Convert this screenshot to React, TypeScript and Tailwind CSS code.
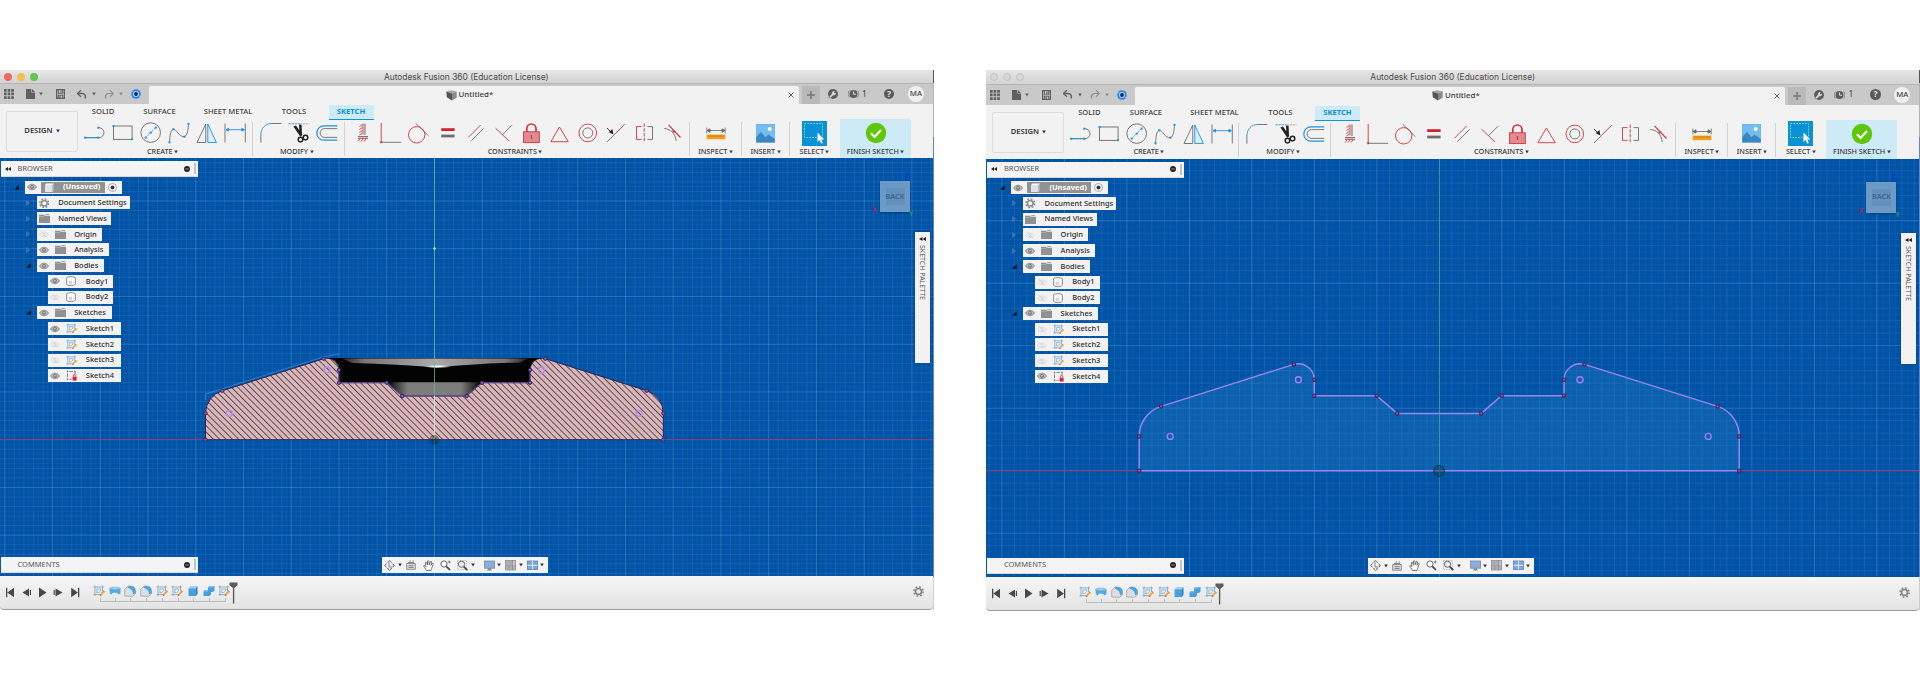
import React from 'react';

const G = '#6b6b6b';
const B = '#1f93e0';
const R = '#d2323c';

type Kids = { children: React.ReactNode };

function Tool({ children }: Kids) {
  return (
    <svg className="h-6 w-[28.15px] shrink-0" viewBox="0 0 28.15 24" fill="none" strokeWidth="0.9">
      {children}
    </svg>
  );
}

function Dot({ x, y, c = B }: { x: number; y: number; c?: string }) {
  return <rect x={x - 1} y={y - 1} width="2" height="2" fill={c} />;
}

function Caret({ className = '' }: { className?: string }) {
  return (
    <svg className={`shrink-0 ${className}`} width="4" height="4" viewBox="0 0 4 4">
      <path d="M.2 .4h3.600L2 3.600z" fill="currentColor" />
    </svg>
  );
}

function Label({ children }: Kids) {
  return (
    <div className="-mt-px flex h-[11px] items-center justify-center gap-[1.500px] whitespace-nowrap text-[7.3px] font-medium leading-none tracking-[-0.05px] text-[#3c3c3c]">
      {children}
      <Caret />
    </div>
  );
}

function Sep() {
  return <div className="mt-[2px] h-[34px] w-px shrink-0 bg-[#d3d3d3]" />;
}

function CreateTools() {
  return (
    <>
      <Tool>
        <path d="M3.5 16.7H18A5 5 0 0 0 18 6.7" stroke={G} />
        <path d="M4 16.7h13" stroke={B} />
        <Dot x={4.2} y={16.7} /><Dot x={17.3} y={16.7} /><Dot x={17.3} y={6.7} />
      </Tool>
      <Tool>
        <rect x="4.5" y="5" width="18.6" height="13.4" stroke={G} />
        <Dot x={4.5} y={5} /><Dot x={23} y={18.2} />
      </Tool>
      <Tool>
        <circle cx="13.7" cy="11.6" r="9.8" stroke={G} />
        <path d="M8.5 16.8 18.9 6.4" stroke={B} strokeDasharray="2 1" />
        <Dot x={8.7} y={16.6} /><Dot x={13.7} y={11.6} /><Dot x={18.7} y={6.6} />
      </Tool>
      <Tool>
        <path d="M4.5 21.3C5 14 5.5 9 8.4 8.3S14 16.5 19.5 15.7C22.6 14.5 23.2 8 23.5 2.5" stroke={G} />
        <Dot x={4.5} y={21.3} /><Dot x={8.3} y={8.3} /><Dot x={19.5} y={15.7} /><Dot x={23.5} y={2.8} />
      </Tool>
      <Tool>
        <path d="M12.8 3v18.5H4z" stroke={G} />
        <path d="M14.8 3v18.5h8.6z" stroke={B} fill="#dceefa" />
      </Tool>
      <Tool>
        <path d="M4 2.5v19M24.3 2.5v19" stroke={G} />
        <path d="M5 8.7h18.4M5 8.7l2.5-1.4v2.8zM23.4 8.7l-2.5-1.4v2.8z" stroke={B} fill={B} />
      </Tool>
    </>
  );
}

function ModifyTools() {
  return (
    <>
      <Tool>
        <path d="M3.9 21.7v-8M14.5 2.5h10" stroke={G} />
        <path d="M3.9 14C3.9 7.5 8 2.5 14.8 2.5" stroke={B} />
      </Tool>
      <Tool>
        <path d="M3.5 2.8h11" stroke={B} strokeDasharray="2.4 .8" />
        <path d="M14.5 2.8h10" stroke="#aaa" strokeDasharray="2.4 .8" />
        <path d="M8.4 5.400 11 4.6l6.400 9.400-2 1.800zM14 3.4l2.600.4.4 10-2.400 1z" fill="#222" />
        <circle cx="15.500" cy="18.6" r="2.300" stroke="#222" strokeWidth="1.5" />
        <circle cx="20.500" cy="16.6" r="2.300" stroke="#222" strokeWidth="1.5" />
      </Tool>
      <Tool>
        <path d="M24.3 4.8H11a7.2 7.2 0 0 0 0 14.4h13.3" stroke={B} strokeWidth="1.2" />
        <path d="M24.3 7.6H11.5a4.4 4.4 0 0 0 0 8.8h12.8" stroke={G} />
      </Tool>
    </>
  );
}

function ConstraintTools() {
  return (
    <>
      <Tool>
        <path d="M16 2.5v11.5M9 15.6h10" stroke="#777" strokeWidth="1.1" />
        <path d="M14 2.5v11M10.5 5.5l3-2M10.5 8.5l3-2M10.5 11.5l3-2M10.5 14l3-2M9 17.4h10M9 20.5l2-2.5M12 20.5l2-2.5M15 20.5l2-2.5" stroke={R} />
      </Tool>
      <Tool>
        <path d="M4.2 2v19" stroke={R} />
        <path d="M4.2 21.3h20" stroke={G} />
        <Dot x={4.2} y={21.2} c={R} />
      </Tool>
      <Tool>
        <circle cx="11.7" cy="13.8" r="8.2" stroke={R} />
        <path d="M10.7 2.3l12.7 12.4" stroke={G} />
      </Tool>
      <Tool>
        <path d="M7.2 8.6h13.4" stroke="#cf2230" strokeWidth="2.8" />
        <path d="M7.2 15h13.4" stroke="#6d6d6d" strokeWidth="2.8" />
      </Tool>
      <Tool>
        <path d="M6.4 16.3 18.6 4" stroke={R} />
        <path d="M9.4 19.7 21.6 7.4" stroke={G} />
      </Tool>
      <Tool>
        <path d="M5.6 7.3 19 19.9" stroke={R} />
        <path d="M12.500 13.700 22 4.2" stroke={G} />
      </Tool>
      <Tool>
        <path d="M8.8 11V7.6a4.6 4.6 0 0 1 9.2 0V11" stroke={R} strokeWidth="1.7" />
        <rect x="5.6" y="10.8" width="15.7" height="10.8" fill="#e08b90" stroke={R} />
        <path d="M13.4 14v4" stroke="#b3202a" />
      </Tool>
      <Tool>
        <path d="M13.4 6 22.3 20.7H4.9z" stroke={R} />
      </Tool>
      <Tool>
        <circle cx="13.8" cy="11.9" r="8.8" stroke={R} />
        <circle cx="13.8" cy="11.9" r="5" stroke={G} />
      </Tool>
      <Tool>
        <path d="M5 21 12.8 13.2" stroke={G} />
        <path d="M12.8 13.2 22.8 3" stroke={R} />
        <path d="M5 7l5 5" stroke="#222" />
        <path d="M11.4 13.6 6.8 11.2 10.4 8z" fill="#222" />
      </Tool>
      <Tool>
        <path d="M10.5 5.6h-5v12.8h5" stroke={R} />
        <path d="M13.2 2.5v19" stroke={R} strokeDasharray="3.5 1.2" />
        <path d="M16.5 5.6h5v12.8h-5" stroke={G} />
      </Tool>
      <Tool>
        <path d="M9.5 3.8 21.5 16.5" stroke={R} strokeWidth="1.1" />
        <path d="M5.2 7.6c6.5.2 11 4.400 12 12.400" stroke={G} />
        <Dot x={14.5} y={10.5} c={R} />
      </Tool>
    </>
  );
}

function Group({ children, label, className, labelClass = '' }: Kids & { label: string; className: string; labelClass?: string }) {
  return (
    <div className={`flex shrink-0 flex-col ${className}`}>
      <div className="flex h-[27px] items-center justify-center pb-[1px]">{children}</div>
      <div className={labelClass}>
        <Label>{label}</Label>
      </div>
    </div>
  );
}

function Ribbon() {
  return (
    <div className="flex h-[54px] shrink-0 bg-[#f2f2f2]">
      <div className="ml-[6px] mt-[7px] flex h-[41px] w-[72px] shrink-0 items-center justify-center gap-[3px] rounded-[2px] border border-[#dcdcdc] pb-px text-[7.6px] font-semibold text-[#333]">
        DESIGN
        <Caret />
      </div>
      <div className="ml-[3px] flex flex-1 flex-col">
        <div className="flex h-4 items-stretch text-[7.6px] font-medium leading-none text-[#444]">
          <div className="flex w-11 items-center justify-center">SOLID</div>
          <div className="flex w-[69px] items-center justify-center">SURFACE</div>
          <div className="flex w-[68px] items-center justify-center whitespace-nowrap">SHEET METAL</div>
          <div className="flex w-16 items-center justify-center">TOOLS</div>
          <div className="ml-[3px] mt-px flex w-[45px] items-center justify-center border-b border-[#0a96d8] bg-[#cdeaf7] pr-px font-bold text-[#0a8fd4]">
            SKETCH
          </div>
        </div>
        <div className="flex h-[38px]">
          <Group label="CREATE" className="w-[171px] pr-[3px]" labelClass="pr-[5px]"><CreateTools /></Group>
          <Sep />
          <div className="w-[4px]" />
          <Group label="MODIFY" className="w-[84.5px]" labelClass="pr-[5px]"><ModifyTools /></Group>
          <div className="w-[2.5px]" />
          <Sep />
          <div className="w-[4px]" />
          <Group label="CONSTRAINTS" className="w-[338px]" labelClass="pr-[6px]"><ConstraintTools /></Group>
          <div className="w-[2px]" />
          <Sep />
          <Group label="INSPECT" className="w-[51px]">
            <svg width="20" height="20" viewBox="0 0 20 20" fill="none">
              <path d="M.8 4.500v6M19.200 4.500v6M1 7.500h18M1 7.500l3-1.700v3.400zM19 7.500l-3-1.700v3.400z" stroke="#666" strokeWidth=".8" fill="#666" />
              <rect x=".6" y="11.600" width="18.800" height="4.600" fill="#f3a11c" />
              <path d="M3 12v2M5 12v2M7 12v2M9 12v2M11 12v2M13 12v2M15 12v2M17 12v2" stroke="#a86600" strokeWidth=".6" />
            </svg>
          </Group>
          <Sep />
          <Group label="INSERT" className="w-[47px]">
            <svg width="19" height="19" viewBox="0 0 19 19">
              <rect width="19" height="18.500" fill="#74bdf2" stroke="#6aa9d8" strokeWidth=".6" />
              <circle cx="13.700" cy="5" r="2" fill="#fff3c4" />
              <path d="M.3 13 5 8l4.500 5.200 3-2.600 6.200 4.400v3.300H.3z" fill="#3a85c2" />
            </svg>
          </Group>
          <Sep />
          <Group label="SELECT" className="w-[49px]">
            <svg width="25" height="25" viewBox="0 0 25 25">
              <rect width="25" height="25" fill="#0b91d6" />
              <rect x="2.500" y="2.500" width="18" height="14" fill="none" stroke="#8fe0a0" strokeWidth=".9" strokeDasharray="1.700 1.200" />
              <path d="M15.500 11.500v9.500l2.200-2 1.400 3.600 1.700-.7-1.500-3.500h3z" fill="#fff" />
            </svg>
          </Group>
          <div className="-mt-[1px] ml-px flex w-[71px] bg-[#cdeaf7] pt-px">
            <Group label="FINISH SKETCH" className="w-[71px]">
              <svg width="22" height="22" viewBox="0 0 22 22">
                <circle cx="11" cy="11" r="10.200" fill="#60c608" />
                <path d="M6 11.300 9.600 15 16 8" fill="none" stroke="#fff" strokeWidth="2.200" />
              </svg>
            </Group>
          </div>
        </div>
      </div>
    </div>
  );
}

function QuickBar() {
  return (
    <div className="flex h-5 shrink-0 bg-[#c9c9c9] text-[#606060]">
      <div className="flex w-[149px] shrink-0 items-center">
        <svg className="ml-[4px]" width="10" height="10" viewBox="0 0 10 10" fill="currentColor">
          <path d="M0 0h2.700v2.700H0zM3.600 0h2.700v2.700H3.600zM7.200 0h2.700v2.700H7.200zM0 3.600h2.700v2.700H0zM3.600 3.600h2.700v2.700H3.600zM7.200 3.600h2.700v2.700H7.200zM0 7.200h2.700v2.700H0zM3.600 7.200h2.700v2.700H3.600zM7.200 7.200h2.700v2.700H7.200z" />
        </svg>
        <svg className="ml-[12px]" width="9" height="10" viewBox="0 0 9 10" fill="currentColor">
          <path d="M0 0h5.300v3.600H9V10H0zM6 0l3 3H6z" />
        </svg>
        <Caret className="ml-[4px]" />
        <svg className="ml-[13px]" width="9" height="10" viewBox="0 0 9 10" fill="none" stroke="currentColor">
          <path d="M.6 .6h7.800v8.800H.6z" strokeWidth="1.200" />
          <path d="M2.200 1v3.200h4.600V1M2.200 9V6.300h4.600V9M5 1.500v2M4 7v2" strokeWidth="1.100" />
        </svg>
        <svg className="ml-[12px]" width="10" height="9" viewBox="0 0 10 9" fill="none" stroke="currentColor">
          <path d="M1 3.500h4c2.500 0 3.800 1.500 3.300 5" strokeWidth="1.500" />
          <path d="M4 .2.400 3.500 4 6.800" strokeWidth="1.300" />
        </svg>
        <Caret className="ml-[5px]" />
        <svg className="ml-[8px] text-[#8d8d8d]" width="10" height="9" viewBox="0 0 10 9" fill="none" stroke="currentColor">
          <path d="M8.500 3.500H5c-2.500 0-4 1.500-3.500 5" strokeWidth="1.200" />
          <path d="M6 .2 9.300 3.500 6 6.800" strokeWidth="1.100" />
        </svg>
        <Caret className="ml-[5px] text-[#8d8d8d]" />
        <svg className="ml-[7.500px]" width="10" height="10" viewBox="0 0 10 10">
          <circle cx="5" cy="5" r="4.800" fill="#2b86ee" />
          <circle cx="5" cy="5" r="3" fill="#9fd4ff" />
          <circle cx="5" cy="5" r="1.900" fill="#12284a" />
          <path d="M1 2.200 2.500 3.500M9 7.800 7.500 6.500" stroke="#c9c9c9" strokeWidth=".7" />
        </svg>
      </div>
      <div className="mt-[2px] flex w-[650px] shrink-0 items-center rounded-t-[2px] bg-[#f2f2f2]">
        <div className="ml-[296.500px] flex w-[342.500px] items-center">
          <svg width="11" height="11" viewBox="0 0 11 11">
            <path d="M.3 1.500 5 .2l5.700 1.200L6 3.500z" fill="#a5a5a5" />
            <path d="M.3 1.500 6 3.500v7L.8 7.300z" fill="#555" />
            <path d="M6 3.500l4.700-2v6L6 10.500z" fill="#888" />
          </svg>
          <span className="ml-[2px] text-[7.900px] font-medium leading-none text-[#3d3d3d]">Untitled*</span>
        </div>
        <svg width="6" height="6" viewBox="0 0 6 6" stroke="#555" strokeWidth=".9">
          <path d="M.5 .5l5 5M5.500 .5l-5 5" />
        </svg>
      </div>
      <div className="ml-[3px] mt-[2px] flex w-[18px] shrink-0 items-center justify-center bg-[#b9b9b9]">
        <svg width="8" height="8" viewBox="0 0 8 8" stroke="#777" strokeWidth="1.500"><path d="M4 0v8M0 4h8" /></svg>
      </div>
      <div className="flex flex-1 items-center">
        <svg className="ml-[8px]" width="10" height="10" viewBox="0 0 10 10">
          <circle cx="5" cy="5" r="5" fill="#5d5d5d" />
          <path d="M2 8.200 5 5.200" stroke="#d8d8d8" strokeWidth="1.700" />
          <path d="M4 5.500a2.400 2.400 0 0 1 2.800-3.300L5.800 3.600l.8.800 1.400-1A2.400 2.400 0 0 1 5 6.200z" fill="#d8d8d8" />
        </svg>
        <svg className="ml-[10px]" width="11" height="10" viewBox="0 0 11 10">
          <path d="M1.600 1.500a4.800 4.800 0 0 0 0 7M9.400 1.500a4.800 4.800 0 0 1 0 7" stroke="#777" fill="none" strokeWidth=".8" />
          <circle cx="5.500" cy="5" r="4" fill="#5d5d5d" />
          <path d="M5.500 2.500V5.200H8" stroke="#ddd" fill="none" />
        </svg>
        <span className="ml-[3px] text-[8.500px] leading-none text-[#444]">1</span>
        <div className="ml-[17px] flex size-[10.500px] items-center justify-center rounded-full bg-[#5a5a5a] text-[8.500px] font-bold leading-none text-[#e4e4e4]">?</div>
        <div className="ml-[13.500px] flex size-4 items-center justify-center rounded-full bg-[#f0f0f0] text-[7.800px] font-medium leading-none text-[#444]">MA</div>
      </div>
    </div>
  );
}

function Eye({ on }: { on: boolean }) {
  return on ? (
    <svg width="10" height="8" viewBox="0 0 10 8">
      <path d="M.5 4C2.500.3 7.500.3 9.500 4 7.500 7.700 2.500 7.700.5 4z" fill="#b9b9b9" stroke="#8c8c8c" strokeWidth=".9" />
      <circle cx="5" cy="4" r="1.900" fill="#777" />
      <circle cx="5" cy="3.800" r=".7" fill="#eee" />
    </svg>
  ) : (
    <svg width="10" height="8" viewBox="0 0 10 8" fill="none" stroke="#d6d6d6" strokeWidth=".9">
      <path d="M.7 4.500C2.500 1.200 7.500 1.200 9.300 4.500 7.500 7.500 2.500 7.500.7 4.500zM1.500 .8l7 6.800" />
      <circle cx="5" cy="4.400" r="1.400" />
    </svg>
  );
}

function SketchGlyph({ size = 11 }: { size?: number }) {
  return (
    <svg width={size} height={size} viewBox="0 0 11 11" fill="none">
      <path d="M.5 1.800h9.500M.5 8.800h6M1.800 .5v9.500M8.700 .5v5" stroke="#7fa6c4" strokeWidth=".8" />
      <path d="M3.600 7.200V3.600h3.600c0 2-1.200 3.400-3.600 3.600z" stroke="#4f97d0" strokeWidth=".6" fill="#f5fafd" />
      <path d="M10 5.700 7.300 8.500" stroke="#f3a32a" strokeWidth="1.700" />
      <path d="M6.900 8.200 6 10.200l2-.9z" fill="#d43b2a" />
      <path d="M9.500 5.200l1.200 1.200" stroke="#e05a4a" strokeWidth=".9" />
    </svg>
  );
}

type Kind = 'root' | 'gear' | 'folder' | 'body' | 'sketch' | 'locked';

function Cog({ size, color }: { size: number; color: string }) {
  return (
    <svg width={size} height={size} viewBox="0 0 10 10" fill="none" stroke={color}>
      <circle cx="5" cy="5" r="2.700" strokeWidth="1.500" />
      <circle cx="5" cy="5" r="4.200" strokeWidth="1.400" strokeDasharray="1.650 1.650" />
    </svg>
  );
}

function Glyph({ kind }: { kind: Kind }) {
  if (kind === 'gear') return <Cog size={10.500} color="#8c8c8c" />;
  if (kind === 'folder')
    return (
      <svg width="11" height="9" viewBox="0 0 11 9" fill="#919191">
        <path d="M0 .8h5l.8 1H11V9H0z" />
        <path d="M5.800 0H10v1H6.500z" fill="#a8a8a8" />
        <path d="M0 2.500h4.800l1-.8" stroke="#c4c4c4" strokeWidth=".5" fill="none" />
      </svg>
    );
  if (kind === 'body')
    return (
      <svg width="10" height="10" viewBox="0 0 10 10" fill="none">
        <path d="M.6 1.800C2 .2 8 .2 9.400 1.800V8L8 9.400H1.800L.6 8z" fill="#fafafa" stroke="#777" strokeWidth=".8" />
        <rect x="3" y="4.800" width="3" height="3" fill="#cfd4da" />
      </svg>
    );
  if (kind === 'sketch') return <SketchGlyph />;
  if (kind === 'locked')
    return (
      <svg width="11" height="11" viewBox="0 0 11 11" fill="none">
        <path d="M.8 1.400h1.600M3.500 1.400h3.500M8.200 1.400h1.600M1.500 .8v1.600M1.500 3.500v3.500M1.500 8.200v1.600M.8 9.300h1.600M3.500 9.300h2M9 .8v3.500" stroke="#666" strokeWidth=".8" />
        <rect x="6.600" y="6.800" width="4" height="3.800" fill="#d92535" />
        <path d="M7.400 6.800V5.700a1.200 1.200 0 0 1 2.400 0v1.100" stroke="#d92535" strokeWidth=".9" />
      </svg>
    );
  return (
    <svg width="9" height="9" viewBox="0 0 9 9">
      <path d="M0 2l1.500-1.600H9L7.800 2z" fill="#fff" />
      <path d="M0 2h7.600v7H0z" fill="#dde4ee" />
      <path d="M7.600 2 9 .4v7L7.600 9z" fill="#a7b0bf" />
    </svg>
  );
}

function Arrow({ open }: { open: boolean }) {
  return (
    <div className="flex h-[13px] w-[9px] shrink-0 items-center">
      {open ? (
        <svg width="5" height="5" viewBox="0 0 5 5"><path d="M4.800 0v4.800H0z" fill="#101820" /></svg>
      ) : (
        <svg width="4" height="6" viewBox="0 0 4 6"><path d="M.3 .4v5.200L3.600 3z" fill="#2c72b5" stroke="#5d7f9f" strokeWidth=".6" /></svg>
      )}
    </div>
  );
}

const BOX = 'flex h-[13px] items-center bg-[#f2f2f2] text-[7.500px] leading-none text-[#2e2e2e] font-medium whitespace-nowrap';

function Row({ name, kind, eye, open, w }: { name: string; kind: Kind; eye?: boolean; open?: boolean; w: string }) {
  const leaf = open === undefined;
  return (
    <div className={leaf ? 'flex pl-[48.300px]' : 'flex pl-[25.700px]'}>
      {!leaf && <><Arrow open={!!open} /><div className="w-[2px]" /></>}
      <div className={`${BOX} ${w}`}>
        {eye !== undefined && <div className="ml-[2px] w-[14px] shrink-0"><Eye on={eye} /></div>}
        <div className="ml-[2px] flex w-[16px] shrink-0">
          <Glyph kind={kind} />
        </div>
        <span className="ml-[3.500px]">{name}</span>
      </div>
    </div>
  );
}

function PanelBar({ title, rewind }: { title: string; rewind?: boolean }) {
  return (
    <div className="ml-px flex h-4 w-[197px] shrink-0 items-center border-b border-[#d8d8d8] bg-[#f4f4f4] text-[7.500px] leading-none text-[#555]">
      <div className="flex w-[16.500px] justify-center pr-[3px]">
        {rewind && <svg width="6" height="4" viewBox="0 0 6 4" fill="#222"><path d="M3 0v4L0 2zM6 0v4L3 2z" /></svg>}
      </div>
      <span className="flex-1">{title}</span>
      <svg width="6" height="6" viewBox="0 0 6 6"><circle cx="3" cy="3" r="3" fill="#222" /><path d="M1.200 3h3.600" stroke="#aaa" strokeWidth=".8" /></svg>
      <div className="ml-[4px] mr-[2px] h-[11px] w-[2px] bg-[#c4c4c4]" />
    </div>
  );
}

function Browser({ active }: { active: boolean }) {
  return (
    <div className="flex flex-col">
      <PanelBar title="BROWSER" rewind />
      <div className="mt-[3.600px] flex flex-col gap-[2.720px]">
        <div className="flex pl-[14px]">
          <Arrow open />
          <div className="w-[2px]" />
          <div className={`${BOX} w-[97px]`}>
            <div className="ml-[2px] w-[14px]"><Eye on /></div>
            <div className="flex h-[11px] w-[64px] items-center bg-[#929292] pl-[4px] font-bold text-white">
              <Glyph kind="root" />
              <span className="ml-[9px]">(Unsaved)</span>
            </div>
            <svg className="ml-[3px]" width="9" height="9" viewBox="0 0 9 9">
              <circle cx="4.500" cy="4.500" r="4" fill="#fff" stroke="#8b93a3" strokeWidth=".8" />
              <circle cx="4.500" cy="4.500" r="2" fill="#2a3444" />
            </svg>
          </div>
        </div>
        <Row name="Document Settings" kind="gear" open={false} w="w-[93px]" />
        <Row name="Named Views" kind="folder" open={false} w="w-[74px]" />
        <Row name="Origin" kind="folder" eye={false} open={false} w="w-[65px]" />
        <Row name="Analysis" kind="folder" eye open={false} w="w-[72px]" />
        <Row name="Bodies" kind="folder" eye open w="w-[67px]" />
        <Row name="Body1" kind="body" eye={active} w="w-[65px]" />
        <Row name="Body2" kind="body" eye={false} w="w-[65px]" />
        <Row name="Sketches" kind="folder" eye open w="w-[75px]" />
        <Row name="Sketch1" kind="sketch" eye={active} w="w-[73px]" />
        <Row name="Sketch2" kind="sketch" eye={false} w="w-[73px]" />
        <Row name="Sketch3" kind="sketch" eye={false} w="w-[73px]" />
        <Row name="Sketch4" kind="locked" eye w="w-[73px]" />
      </div>
    </div>
  );
}

function Grid({ cx, cy, step, div, top }: { cx: number; cy: number; step: number; div: number; top: number }) {
  const lines: React.ReactNode[] = [];
  const s = step / div;
  const tone = (i: number) => (i % div === 0 ? 0.24 : i % 2 === 0 ? 0.12 : 0.05);
  for (let i = Math.ceil(-cx / s); cx + i * s < 935; i++) {
    lines.push(<path key={`v${i}`} d={`M${cx + i * s} ${top}v418`} stroke="#9fd0ff" strokeOpacity={tone(i)} />);
  }
  for (let i = Math.ceil((top - cy) / s); cy + i * s < top + 418; i++) {
    lines.push(<path key={`h${i}`} d={`M-2 ${cy + i * s}h937`} stroke="#9fd0ff" strokeOpacity={tone(i)} />);
  }
  return <g>{lines}</g>;
}

const SECTION =
  'M205.500 439.700V413.300A23.800 23.800 0 0 1 222.300 390.700L323.700 358.700A12 12 0 0 1 339 370V382.700H386.700L402.300 396H466.700L482 382.700H530V370A12 12 0 0 1 545.300 358.700L646.700 390.700A23.800 23.800 0 0 1 663.300 413.300V439.700Z';
const SECTION_POINTS = [
  [205.500, 439.700], [205.500, 413.300], [222.300, 390.700], [323.700, 358.700], [339, 370], [339, 382.700], [386.700, 382.700], [402.300, 396],
  [466.700, 396], [482, 382.700], [530, 382.700], [530, 370], [545.300, 358.700], [646.700, 390.700], [663.300, 413.300], [663.300, 439.700],
];

const PROFILE =
  'M152.200 470.300V436A31 31 0 0 1 174.200 406L306.900 364A16 16 0 0 1 327.300 379.300V395.300H389.700L410.100 413H494.200L514.600 395.300H577.100V379.300A16 16 0 0 1 597.500 364L730.600 406A31 31 0 0 1 752.200 436V470.300Z';
const PROFILE_POINTS = [
  [152.200, 470.300], [152.200, 436], [174.200, 406], [306.900, 364], [327.300, 379.300], [327.300, 395.300], [389.700, 395.300], [410.100, 413],
  [494.200, 413], [514.600, 395.300], [577.100, 395.300], [577.100, 379.300], [597.500, 364], [730.600, 406], [752.200, 436], [752.200, 470.300],
];

function SectionDrawing() {
  return (
    <svg className="absolute left-0 top-0" width="933" height="418" viewBox="0 158 933 418" fill="none">
      <defs>
        <pattern id="hatch" width="4.500" height="4.500" patternUnits="userSpaceOnUse" patternTransform="rotate(45)">
          <rect width="4.500" height="4.500" fill="#d9b6ba" />
          <path d="M0 2.250h4.500" stroke="#54434a" strokeWidth=".9" />
        </pattern>
        <linearGradient id="rim" x1="0" x2="1">
          <stop offset="0" stopColor="#222" /><stop offset=".12" stopColor="#777" /><stop offset=".5" stopColor="#aaa" />
          <stop offset=".88" stopColor="#777" /><stop offset="1" stopColor="#222" />
        </linearGradient>
        <linearGradient id="pit" x1="0" x2="1">
          <stop offset="0" stopColor="#000" /><stop offset=".22" stopColor="#7d7d7d" /><stop offset=".78" stopColor="#7d7d7d" /><stop offset="1" stopColor="#000" />
        </linearGradient>
        <radialGradient id="shine"><stop offset="0" stopColor="#fff" /><stop offset="1" stopColor="#fff" stopOpacity="0" /></radialGradient>
      </defs>
      <Grid cx={434.500} cy={439.700} step={47.740} div={10} top={158} />
      <path d="M0 439.500h933" stroke="#8a4276" />
      <path d="M327 358H542L530 383H339V365z" fill="#030303" />
      <path d="M342 358.500H528L520 362.500Q470 364 436 367.500Q400 364 352 363z" fill="url(#rim)" />
      <ellipse cx="438" cy="366.500" rx="14" ry="2" fill="url(#shine)" />
      <path d="M386.700 382.300H482L466.700 396H402.300z" fill="url(#pit)" />
      <path d="M205.500 400V394L323 357 339 354" stroke="#2f8fd8" strokeWidth=".8" />
      <path d={SECTION} fill="url(#hatch)" stroke="#2c2350" strokeWidth="1" />
      <path d="M339 370V382.700H386.700L402.300 396H466.700L482 382.700H530V370" stroke="#6a4f9c" strokeWidth=".9" />
      <path d="M434.500 158V439" stroke="#5fc08a" strokeOpacity=".75" />
      <path d="M434.500 396V439" stroke="#e6f2df" strokeOpacity=".8" />
      <path d="M434.500 440V576" stroke="#2f8f80" strokeOpacity=".7" />
      <circle cx="434.500" cy="248.500" r="1.200" fill="#b8f0b8" />
      <circle cx="434.300" cy="440" r="5" fill="#1b2c3a" fillOpacity=".45" />
      {SECTION_POINTS.map(([x, y]) => (
        <circle key={`${x}-${y}`} cx={x} cy={y} r="1.700" fill="#8a5fae" stroke="#33235e" strokeWidth="1" />
      ))}
      {[[229.300, 413.300], [327, 370], [541.500, 370], [639, 413.300]].map(([x, y]) => (
        <circle key={x} cx={x} cy={y} r="3" stroke="#b58be6" strokeWidth="1.300" />
      ))}
    </svg>
  );
}

function ProfileDrawing() {
  return (
    <svg className="absolute left-0 top-0" width="934" height="418" viewBox="-1 158.600 934 418" fill="none">
      <Grid cx={452.400} cy={470.300} step={62.500} div={10} top={158} />
      <path d={PROFILE} fill="#2a86c4" fillOpacity=".28" />
      <path d="M-1 470.100h935" stroke="#8d4470" />
      <path d="M452.500 158V470" stroke="#3fa08c" strokeOpacity=".8" />
      <path d="M452.500 471V577" stroke="#2c8a88" strokeOpacity=".7" />
      <path d={PROFILE} stroke="#9a86ea" strokeWidth="1.500" />
      <circle cx="452.200" cy="470.500" r="5.500" fill="#0d3f5e" fillOpacity=".5" stroke="#123a55" />
      {PROFILE_POINTS.map(([x, y]) => (
        <circle key={`${x}-${y}`} cx={x} cy={y} r="1.700" fill="#b0507e" stroke="#3a2560" strokeWidth="1.100" />
      ))}
      {[[183.200, 436], [311.400, 379.300], [593, 379.300], [721.200, 436]].map(([x, y]) => (
        <circle key={x} cx={x} cy={y} r="3" stroke="#a77cf0" strokeWidth="1.400" />
      ))}
    </svg>
  );
}

function NavBar() {
  return (
    <div className="absolute bottom-[3px] left-[382px] flex h-4 w-[166px] items-center bg-[#f3f3f3] text-[#333]">
      <svg className="ml-[2px]" width="11" height="11" viewBox="0 0 11 11" fill="none" stroke="#666" strokeWidth=".8">
        <path d="M5.500 .5 7.500 2M5.500 .5 3.500 2M5.500 10.500 7.500 9M5.500 10.500 3.500 9M.5 5.500 2 4M.5 5.500 2 7M10.500 5.500 9 4M10.500 5.500 9 7M5 3v4h3" />
        <ellipse cx="5.500" cy="5.500" rx="3.800" ry="3.500" strokeDasharray="2 1" />
      </svg>
      <Caret className="ml-[3px]" />
      <svg className="ml-[4px]" width="10" height="10" viewBox="0 0 10 10" fill="none" stroke="#777">
        <path d="M.7 3.500h8.600v5.800H.7z" fill="#ddd" strokeWidth=".8" /><path d="M2 2.500h6M3.500 1h1.500M6.500 1h1.500M2.500 5.700h5M2.500 7.500h5" strokeWidth=".9" />
      </svg>
      <svg className="ml-[7px]" width="11" height="11" viewBox="0 0 11 11" fill="#fff" stroke="#555" strokeWidth=".8">
        <path d="M3.500 10.500C2.500 8.500 1.300 7 .6 5.800c.6-.8 1.500-.2 2.300.8L2.300 2.500c.6-.7 1.200-.3 1.500.4l.6 2L4.500 1c.6-.7 1.200-.4 1.400.3l.3 3.500L7.400 1.500c.7-.4 1.200 0 1.100.6L8 5.300l1.300-2c.8-.2 1 .3.800.9L8.600 8.500 8 10.500z" />
      </svg>
      <svg className="ml-[6px]" width="11" height="11" viewBox="0 0 11 11" fill="none" stroke="#444">
        <circle cx="4" cy="4" r="3.100" strokeWidth=".8" fill="#fafdff" />
        <path d="M6.300 6.300 10 10" strokeWidth="1.700" /><path d="M9.300 .5v3M7.800 2h3" strokeWidth=".6" />
      </svg>
      <svg className="ml-[6px]" width="11" height="11" viewBox="0 0 11 11" fill="none" stroke="#444">
        <path d="M.5 .5h9v9h-9z" stroke="#999" strokeWidth=".6" strokeDasharray="1.300 1" />
        <circle cx="4.500" cy="4.200" r="3.100" strokeWidth=".8" fill="#e3f1fb" />
        <path d="M6.800 6.600 10.300 10.200" strokeWidth="1.700" />
      </svg>
      <Caret className="ml-[3px]" />
      <svg className="ml-[9px]" width="11" height="11" viewBox="0 0 11 11">
        <rect x=".4" y="1" width="10.200" height="7.200" fill="#86aee0" stroke="#7f8794" strokeWidth=".8" />
        <path d="M4 8.300h3v1.400h1v.8H3v-.8h1z" fill="#888" />
      </svg>
      <Caret className="ml-[2px]" />
      <svg className="ml-[4px]" width="11" height="11" viewBox="0 0 11 11">
        <rect x=".5" y=".5" width="10" height="9.500" fill="#c2c4ca" stroke="#8a8a8a" strokeWidth=".8" />
        <path d="M.8 .8h6.500v5H.8z" fill="#a9adb8" />
        <path d="M.5 6h10M.5 8h10M7.500 .5V10M4 6v4" stroke="#777" strokeWidth=".5" />
      </svg>
      <Caret className="ml-[3px]" />
      <svg className="ml-[4px]" width="11" height="11" viewBox="0 0 11 11">
        <rect x=".5" y="1" width="10" height="8.500" fill="#7ba9dd" stroke="#5c7fa8" strokeWidth=".8" />
        <path d="M5.500 1v8.500M.5 5.300h10" stroke="#e6effa" strokeWidth=".9" />
      </svg>
      <Caret className="ml-[2px]" />
    </div>
  );
}

function ViewCube() {
  return (
    <div className="absolute left-[872px] top-[13px] h-[46px] w-[44px] text-[7px] font-bold leading-none">
      <div className="absolute left-[8px] top-[10px] flex h-[31px] w-[30px] items-center justify-center bg-[#6c9ac6] shadow-[0_1px_2px_#063c78]">
        <div className="flex h-[17px] w-[19px] items-center justify-center bg-[#6490bd] text-[7.200px] font-bold text-[#44698f]">BACK</div>
      </div>
      <span className="absolute left-0 top-[35px] text-[#9b2a62]">X</span>
      <span className="absolute left-[33px] top-[1px] text-[#0a30dc]">Z</span>
      <span className="absolute left-[37px] top-[39px] text-[#0fa35a]">Y</span>
    </div>
  );
}

function Palette() {
  return (
    <div className="absolute left-[915px] top-[74px] flex h-[131px] w-[15px] flex-col items-center bg-[#f2f2f2] pt-[5px] shadow-[0_0_2px_#0a3a70]">
      <svg width="7" height="4" viewBox="0 0 7 4" fill="#222"><path d="M3.500 0v4L0 2zM7 0v4L3.500 2z" /></svg>
      <span className="mt-[4px] whitespace-nowrap text-[7px] leading-none text-[#555] [writing-mode:vertical-rl]">SKETCH PALETTE</span>
    </div>
  );
}

function FeatureGlyph({ kind }: { kind: number }) {
  if (kind === 0) return <SketchGlyph size={12} />;
  if (kind === 1)
    return (
      <svg width="12" height="12" viewBox="0 0 12 12">
        <path d="M.5 3.500C3 1.500 9 1.500 11.500 3.500V8.500L9 9.500 8.500 8C7 7.500 5 7.500 3.500 8L3 9.500.8 8.500z" fill="#56aae2" />
        <path d="M.5 3.500C3 1.500 9 1.500 11.500 3.500 9 5 3 5 .5 3.500z" fill="#9fcff0" stroke="#7b99ad" strokeWidth=".4" />
      </svg>
    );
  if (kind === 2)
    return (
      <svg width="12" height="12" viewBox="0 0 12 12">
        <path d="M.7 11V4.500L4 1h2.500a5 5 0 0 1 5 5V9l-3 2.300z" fill="#dcdfe2" stroke="#999" strokeWidth=".7" />
        <path d="M4.500 1H7a5 5 0 0 1 4.500 4.800V8L9 9.500C9 5.500 7 3.500 3.800 3z" fill="#4ba4e2" />
      </svg>
    );
  if (kind === 3)
    return (
      <svg width="12" height="12" viewBox="0 0 12 12">
        <path d="M1.500 3.300 3.800 1h6.700L9 3.300z" fill="#9ed0f3" />
        <path d="M1.500 3.300H9V11H1.500z" fill="#4aa0df" /><path d="M9 3.300 10.500 1v7.500L9 11z" fill="#2f7fbf" />
      </svg>
    );
  return (
    <svg width="12" height="12" viewBox="0 0 12 12">
      <path d="M.5 6.500 2 5h3V2.500L6.500 1h5v4.500L10 7H8v2.500L6.500 11h-6z" fill="#4aa0df" />
      <path d="M.5 6.500 2 5h3V2.500L6.500 1h5L10 2.500H5V6.500z" fill="#7dbdec" />
    </svg>
  );
}

function Timeline() {
  return (
    <div className="flex h-[34px] shrink-0 rounded-b-[4px] border-b border-[#9b9b9b] bg-linear-to-b from-[#f6f6f6] to-[#e3e3e3]">
      <svg className="mt-[11px] shrink-0" width="92" height="11" viewBox="0 0 92 11" fill="#484848">
        <path d="M6 .8h1.300v9.400H6zM14 .8v9.400L7.300 5.500z" />
        <path d="M29 1.500v8L22.500 5.500zM29.800 3h1.200v5h-1.200z" />
        <path d="M39 .5v10l7.500-5z" />
        <path d="M55.500 1.500v8l7-4zM53.600 3h1.200v5h-1.200z" />
        <path d="M71.200 .8v9.400l6.700-4.700zM78 .8h1.300v9.400H78z" />
      </svg>
      <div className="mt-[9px] flex w-[144px] shrink-0 flex-col">
        <div className="flex gap-[3.680px] pl-[1px]">
          {[0, 1, 2, 2, 0, 0, 3, 4, 0].map((k, i) => (
            <FeatureGlyph key={i} kind={k} />
          ))}
        </div>
        <svg className="mt-[1px]" width="140" height="5" viewBox="0 0 140 5" fill="none" stroke="#bcbcbc">
          <path d="M8.500 0v3.500h125V0M23.500 0v3.500M38.500 0v3.500M54.500 0v3.500M70.500 0v3.500M86.500 0v3.500M101.500 0v3.500M117.500 0v3.500" />
        </svg>
      </div>
      <svg className="-ml-[7.500px] mt-[6px] shrink-0" width="9" height="22" viewBox="0 0 9 22" fill="#5c5c5c">
        <path d="M.5 .5h8v2.700L5.300 6v15.500H3.900V6L.5 3.200z" />
      </svg>
      <div className="ml-auto mr-[9px] mt-[10px]">
        <Cog size={11} color="#868686" />
      </div>
    </div>
  );
}

function FusionWindow({ active }: { active: boolean }) {
  const light = active ? '' : 'border border-[#c2c2c2] bg-[#d6d6d6]';
  return (
    <div className={`mt-[70px] flex shrink-0 ${active ? 'w-[934px]' : 'w-[933.600px]'}`}>
      <div className="flex w-[932.600px] shrink-0 flex-col">
        <div
          className={`flex shrink-0 items-center border-b border-[#b5b5b5] bg-linear-to-b from-[#e6e6e6] to-[#d3d3d3] ${active ? 'h-[14px]' : 'h-[14.600px]'}`}
        >
          <div className="ml-[4px] flex w-[200px] gap-[5px]">
            <div className={`size-2 rounded-full ${light} ${active ? 'bg-[#ed6a5e]' : ''}`} />
            <div className={`size-2 rounded-full ${light} ${active ? 'bg-[#f4bf4f]' : ''}`} />
            <div className={`size-2 rounded-full ${light} ${active ? 'bg-[#61c554]' : ''}`} />
          </div>
          <div className="flex-1 pt-px text-center font-[Inter,sans-serif] text-[8.400px] leading-none text-[#4b4b4b]">
            Autodesk Fusion 360 (Education License)
          </div>
          <div className="w-[204px]" />
        </div>
        <QuickBar />
        <Ribbon />
        <div className="relative flex h-[418px] shrink-0 flex-col overflow-hidden bg-[#0053a6]">
          {active ? <SectionDrawing /> : <ProfileDrawing />}
          <div className="relative flex flex-1 flex-col justify-between pb-[3px] pt-[3px]">
            <Browser active={active} />
            <PanelBar title="COMMENTS" />
          </div>
          <NavBar />
          <ViewCube />
          <Palette />
        </div>
        <Timeline />
      </div>
      <div className="flex w-px shrink-0 flex-col">
        <div className="h-[13px] bg-[#555]" />
        <div className="h-[54px] bg-[#b4b4b4]" />
        <div className="h-[440px] bg-[#5f86bb]" />
        <div className="h-[33px] bg-[#cfcfcf]" />
      </div>
    </div>
  );
}

export default function App() {
  return (
    <div className="flex h-[681px] w-[1920px] justify-between overflow-hidden bg-white font-['Noto_Sans','Open_Sans',sans-serif]">
      <FusionWindow active />
      <FusionWindow active={false} />
    </div>
  );
}
